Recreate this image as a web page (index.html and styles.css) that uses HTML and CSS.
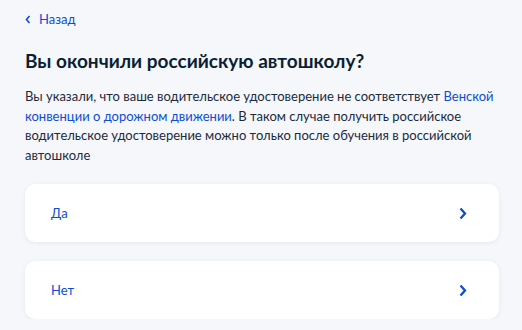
FILE: index.html
```html
<!DOCTYPE html>
<html lang="ru">
<head>
    <meta charset="UTF-8">
    <meta name="viewport" content="width=device-width, initial-scale=1.0">
    <title>Автошкола</title>
    <link rel="stylesheet" href="styles.css">
</head>
<body>

    <div class="page">
        <!-- Back link -->
        <a class="back-link" href="#">
            <svg class="back-icon" width="6" height="9" viewBox="0 0 6 9">
                <path d="M4.5 1 L1.5 4.5 L4.5 8" fill="none" stroke="currentColor" stroke-width="1.6"/>
            </svg>
            <span>Назад</span>
        </a>

        <h1>Вы окончили российскую автошколу?</h1>

        <p class="lead">
            Вы указали, что ваше водительское удостоверение не соответствует
            <a href="#">Венской конвенции о дорожном движении</a>.
            В таком случае получить российское водительское удостоверение можно
            только после обучения в российской автошколе
        </p>

        <!-- Answer options -->
        <div class="options">
            <a class="option" href="#">
                <span>Да</span>
                <svg class="chevron" width="8" height="13" viewBox="0 0 8 13">
                    <path d="M1.5 1.5 L6 6.5 L1.5 11.5" fill="none" stroke="currentColor" stroke-width="2.3"/>
                </svg>
            </a>
            <a class="option" href="#">
                <span>Нет</span>
                <svg class="chevron" width="8" height="13" viewBox="0 0 8 13">
                    <path d="M1.5 1.5 L6 6.5 L1.5 11.5" fill="none" stroke="currentColor" stroke-width="2.3"/>
                </svg>
            </a>
        </div>
    </div>

</body>
</html>
```

FILE: styles.css
```css
body {
    font-family: 'Lato', 'Noto Sans', sans-serif;
    background-color: #f5f7fb;
    color: #0b1f33;
    margin: 0;
}

a {
    color: #0d4cd3;
    text-decoration: none;
}

.page {
    padding: 11px 23px 0 25px;
}

.back-link {
    display: flex;
    width: max-content;
    align-items: center;
    gap: 8px;
    font-size: 13px;
    line-height: 16px;
}

.back-icon {
    margin-top: 1px;
}

h1 {
    font-size: 19px;
    line-height: 24px;
    font-weight: 700;
    margin: 22px 0 14px;
}

.lead {
    font-size: 13px;
    line-height: 19.5px;
    color: #1b2b3d;
    margin: 0 0 19px;
}

.options {
    display: flex;
    flex-direction: column;
    gap: 19px;
}

.option {
    display: flex;
    align-items: center;
    justify-content: space-between;
    height: 58px;
    padding: 0 32px 0 26px;
    background-color: white;
    border-radius: 10px;
    box-shadow: 0 1px 4px rgba(30, 60, 120, 0.08);
    font-size: 13px;
}
```
